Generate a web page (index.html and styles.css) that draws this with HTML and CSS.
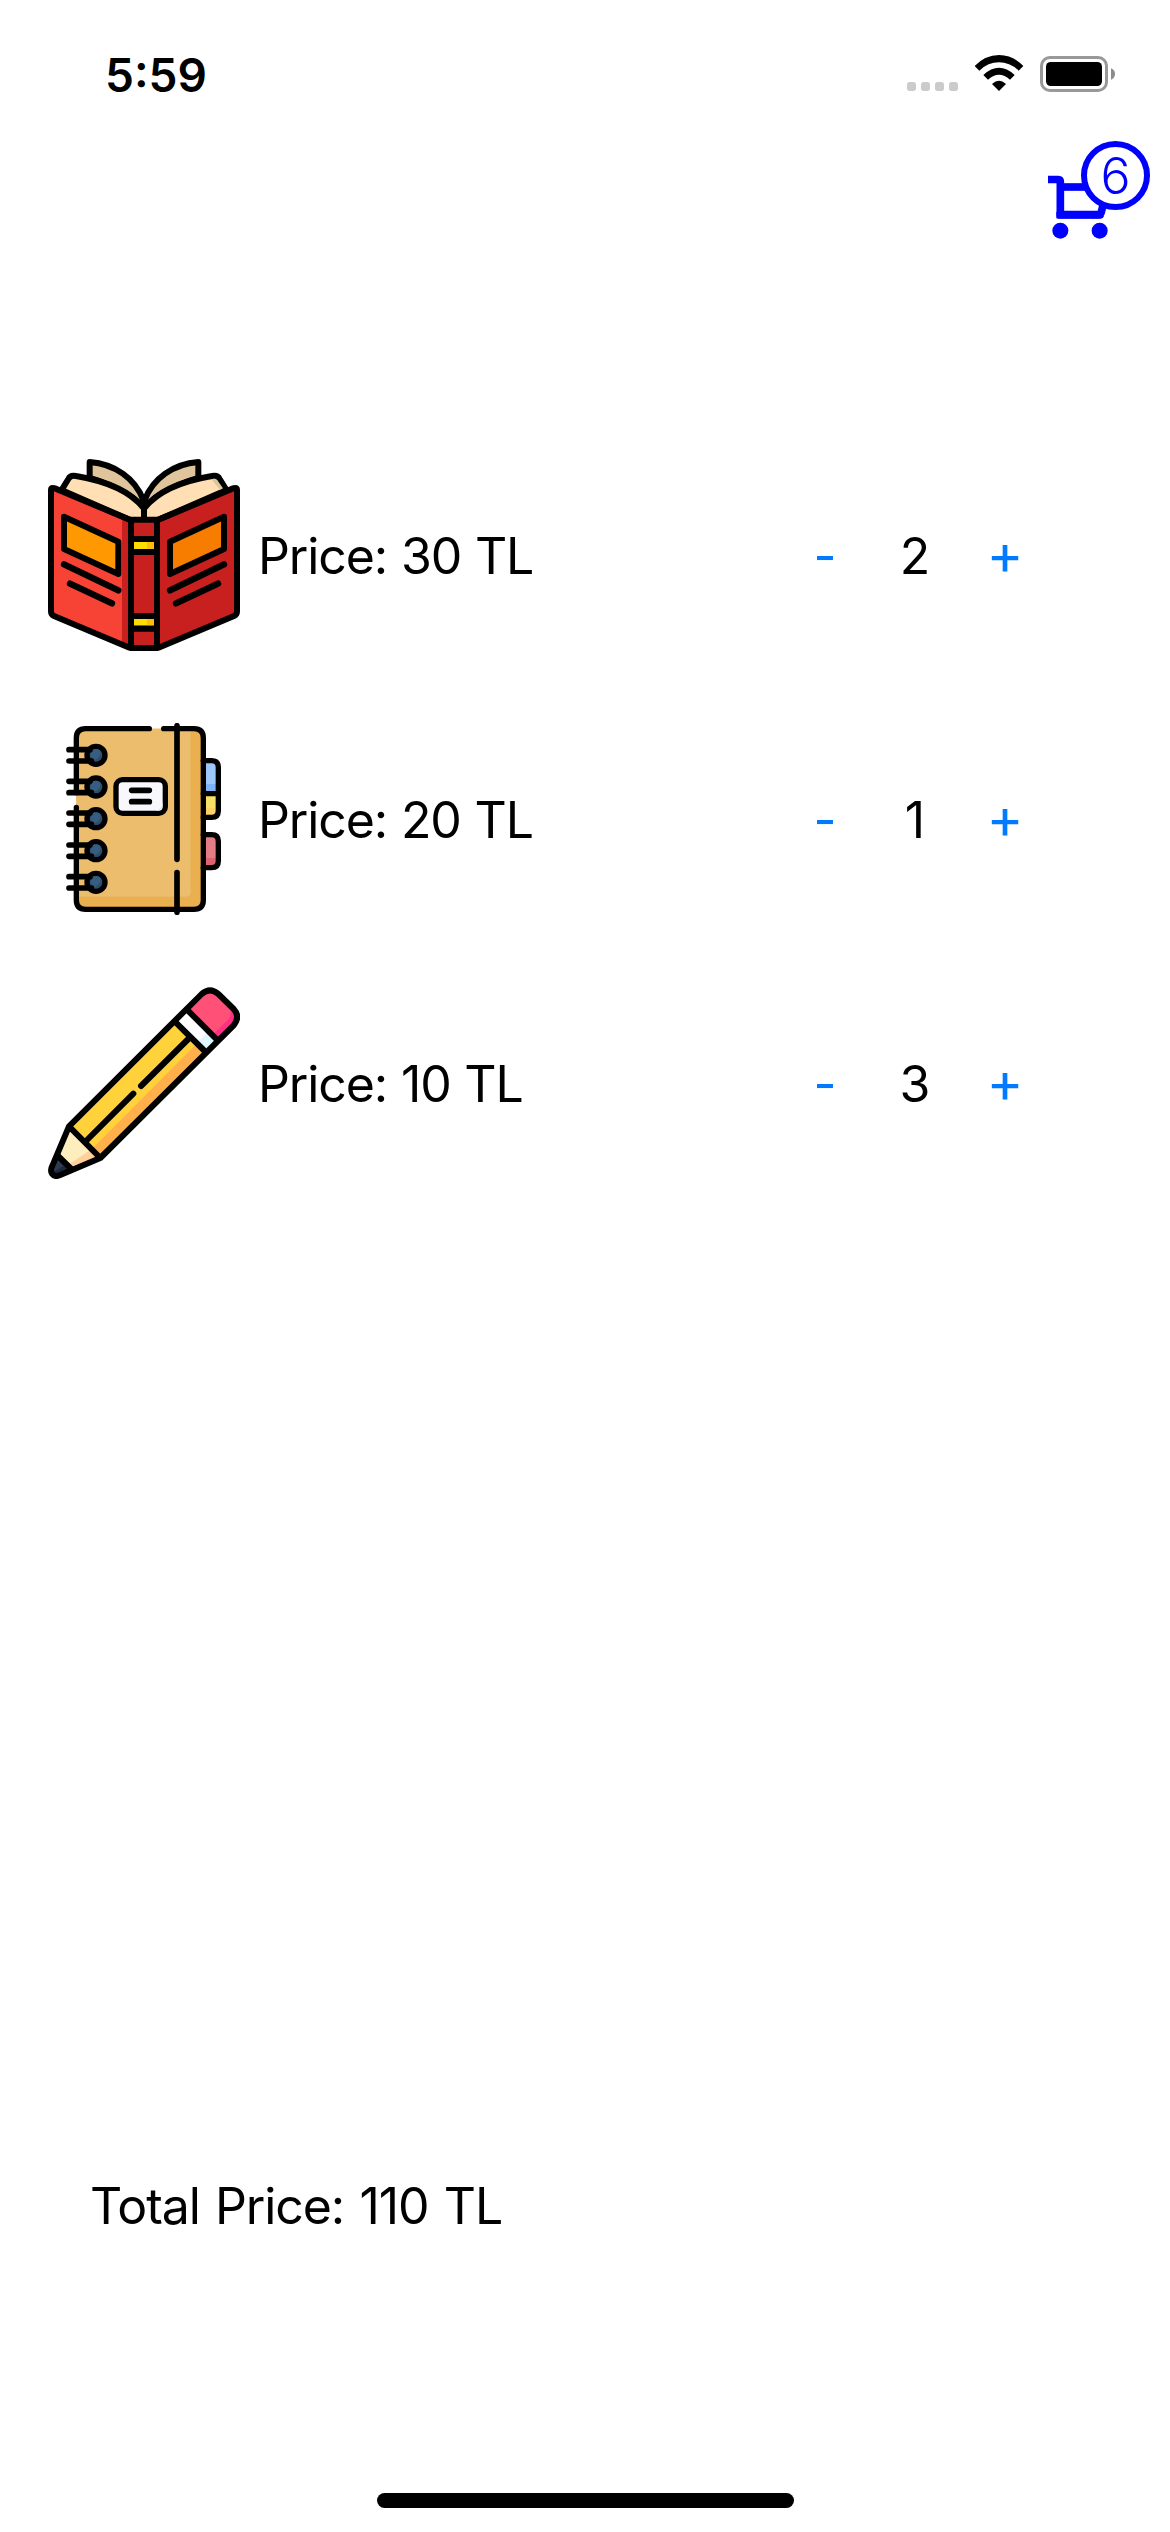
FILE: index.html
```html
<!DOCTYPE html>
<html lang="en">
<head>
<meta charset="utf-8">
<title>Cart</title>
<link rel="stylesheet" href="styles.css">
</head>
<body>
<div class="screen">
  <div class="status">
    <span class="time">5:59</span>
    <svg class="status-icons" width="250" height="70" viewBox="0 0 750 210">
      <g fill="#cbcbcb">
        <rect x="51" y="126" width="27" height="27" rx="8"/>
        <rect x="93" y="126" width="27" height="27" rx="8"/>
        <rect x="135" y="126" width="27" height="27" rx="8"/>
        <rect x="177" y="126" width="27" height="27" rx="8"/>
      </g>
      <path d="M327 153 L306 132 Q327 112 348 132 Z"/>
      <path d="M280 105 Q327 62 374 105 L360 119 Q327 89 294 119 Z"/>
      <path d="M254 78 Q286 45 327 45 Q368 45 400 78 L386 92 Q360 67 327 67 Q294 67 268 92 Z"/>
      <rect x="454.500" y="52.500" width="195" height="99" rx="25" fill="none" stroke="#999" stroke-width="9"/>
      <rect x="468" y="66" width="168" height="72" rx="14"/>
      <path d="M663 85 Q675 90 675 102 Q675 114 663 119 Z" fill="#8c8c8c"/>
    </svg>
  </div>

  <header class="header">
    <div class="cart">
      <svg class="cart-icon" width="60" height="65" viewBox="54 135 180 195" fill="none" stroke="#00f">
        <path d="M54 148.500H85Q91 148.500 91 155V254H204Q212 254 214 246L228 190" stroke-width="23"/>
        <path d="M91 171H180" stroke-width="23"/>
        <path d="M79 245V258Q79 266 88 266H212Q220 266 222 258" stroke="none" fill="#00f"/>
        <circle cx="91" cy="302" r="24" fill="#00f" stroke="none"/>
        <circle cx="209" cy="302" r="24" fill="#00f" stroke="none"/>
      </svg>
      <span class="badge">6</span>
    </div>
  </header>

  <main class="list">
    <div class="row">
      <svg class="picture" viewBox="24 27 576 576" stroke="#000" stroke-width="18" stroke-linejoin="round" stroke-linecap="round">
        <path d="M33 114L273 215V592L33 493Z" fill="#f74336" stroke="none"/>
        <path d="M246 200L273 212V592L246 582Z" fill="#c81f1f" stroke="none"/>
        <path d="M591 114L351 215V592L591 493Z" fill="#c81f1f" stroke="none"/>
        <path d="M149 100V36C225 42 285 85 310 150V172C270 130 220 105 149 84Z" fill="#dfc49c"/>
        <path d="M475 100V36C399 42 339 85 314 150V172C354 130 404 105 475 84Z" fill="#dfc49c"/>
        <path d="M66 118L85 87Q91 74 108 78C185 91 268 118 312 176V211H273L66 121Z" fill="#ffdfb3"/>
        <path d="M558 118L539 87Q533 74 516 78C439 91 356 118 312 176V211H351L558 121Z" fill="#ffdfb3"/>
        <path d="M514 88Q526 84 532 91L549 115L540 119Z" fill="#dfc49c" stroke="none"/>
        <path d="M273 211L56 120Q33 108 33 120V484Q33 494 42 498L265 592Q273 594 282 594H342Q351 594 359 592L582 498Q591 494 591 484V120Q591 108 568 120L351 211" fill="none"/>
        <rect x="273" y="209" width="78" height="385" fill="#c81f1f"/>
        <rect x="282" y="276" width="60" height="21" fill="#ffdc00" stroke="none"/>
        <rect x="321" y="276" width="21" height="21" fill="#fdbb0a" stroke="none"/>
        <rect x="282" y="507" width="60" height="19" fill="#ffdc00" stroke="none"/>
        <rect x="321" y="507" width="21" height="19" fill="#fdbb0a" stroke="none"/>
        <path d="M273 267H351M273 306H351M273 498H351M273 536H351" stroke-linecap="butt"/>
        <path d="M72 200L235 275V372L72 297Z" fill="#ff9801"/>
        <path d="M552 200L390 275V372L552 297Z" fill="#f77d00"/>
        <path d="M72 343L235 421M90 401L216 460M552 343L390 421M534 401L408 460" fill="none" stroke-width="19"/>
      </svg>
      <span class="price">Price: 30 TL</span>
      <div class="stepper"><span class="step">-</span><span class="count">2</span><span class="step plus">+</span></div>
    </div>

    <div class="row">
      <svg class="picture" viewBox="24 24 576 576" stroke="#000" stroke-width="16" stroke-linejoin="round" stroke-linecap="round" fill="none">
        <rect x="109" y="41" width="381" height="542" rx="28" fill="#eaaf4e" stroke="none"/>
        <path d="M109 545V69Q109 41 137 41H452V531Q452 545 438 545Z" fill="#ebbd6d" stroke="none"/>
        <path d="M490 137H519Q535 137 535 153V236H490Z" fill="#9dc6fb" stroke="none"/>
        <path d="M490 207H535V236H490Z" fill="#7eb3fa" stroke="none"/>
        <path d="M490 236H535V291Q535 307 519 307H490Z" fill="#f6e066" stroke="none"/>
        <path d="M490 279H535V291Q535 307 519 307H490Z" fill="#ffd064" stroke="none"/>
        <path d="M490 359H519Q535 359 535 375V442Q535 458 519 458H490Z" fill="#e37c84" stroke="none"/>
        <path d="M490 429H535V442Q535 458 519 458H490Z" fill="#dd636e" stroke="none"/>
        <path d="M490 137H515Q535 137 535 157V287Q535 307 515 307H490M490 236H535M490 359H515Q535 359 535 379V438Q535 458 515 458H490"/>
        <path d="M328 41H137Q109 41 109 69V233M109 277V555Q109 583 137 583H462Q490 583 490 555V69Q490 41 462 41H371"/>
        <path d="M411 32V433M411 473V592" stroke-width="17"/>
        <rect x="228" y="194" width="148" height="101" rx="20" fill="#f8f7fc"/>
        <path d="M236 287H348Q367 281 368 258V273Q366 287 355 287Z" fill="#e4ebf8" stroke="none"/>
        <path d="M275 226H328M275 260H328" stroke-width="17"/>
        <g id="ring">
          <circle cx="168" cy="121" r="27" fill="#2e4f6b"/>
          <path d="M154 105Q177 97 182 110Q184 125 164 135Q162 127 152 126Z" fill="#365e80" stroke="none"/>
          <path d="M87 104H150M87 138H154" stroke-width="17"/>
        </g>
        <use href="#ring" y="95"/>
        <use href="#ring" y="190"/>
        <use href="#ring" y="286"/>
        <use href="#ring" y="381"/>
      </svg>
      <span class="price">Price: 20 TL</span>
      <div class="stepper"><span class="step">-</span><span class="count">1</span><span class="step plus">+</span></div>
    </div>

    <div class="row">
      <svg class="picture" viewBox="24 21 576 576" stroke="#000" stroke-width="18" stroke-linejoin="round" stroke-linecap="round" fill="none">
        <path d="M87 439L404 124L497 216L181 534Z" fill="#ffd13b" stroke="none"/>
        <path d="M471 190L497 216L181 534L155 508Z" fill="#ffb04a" stroke="none"/>
        <path d="M404 124L440 88L533 181L497 216Z" fill="#fff" stroke="none"/>
        <path d="M504 154L533 181L497 216L471 190Z" fill="#dff5ff" stroke="none"/>
        <path d="M440 88L485 42Q510 20 535 42L581 87Q602 110 581 136L533 181Z" fill="#ff5078" stroke="none"/>
        <path d="M518 165L566 117Q575 106 571 84L581 87Q602 110 581 136L533 181Z" fill="#ff2f86" stroke="none"/>
        <path d="M87 439L181 534L96 569L54 528Z" fill="#ffeebd" stroke="none"/>
        <path d="M155 508L181 534L96 569L84 555Z" fill="#ffcf9c" stroke="none"/>
        <path d="M54 528L96 569L50 587Q30 585 34 570Z" fill="#2e3c51" stroke="none"/>
        <path d="M77 554L96 569L50 587Q42 585 40 576Z" fill="#1d293d" stroke="none"/>
        <path d="M87 439L485 42Q510 20 535 42L581 87Q602 110 581 136L181 534L59 586Q44 592 36 581Q31 573 35 562Z"/>
        <path d="M87 439L181 534M404 124L497 216M440 88L533 181M54 528L96 569" stroke-linecap="butt"/>
        <path d="M445 177L303 318M280 341L138 483"/>
      </svg>
      <span class="price">Price: 10 TL</span>
      <div class="stepper"><span class="step">-</span><span class="count">3</span><span class="step plus">+</span></div>
    </div>
  </main>

  <footer class="footer">
    <div class="total">Total Price: 110 TL</div>
    <div class="home-bar"></div>
  </footer>
</div>
</body>
</html>
```
FILE: styles.css
```css
* { box-sizing: border-box; }

body {
  margin: 0;
  background: #fff;
  color: #000;
  font-family: Inter, "Liberation Sans", sans-serif;
  font-size: 50px;
  line-height: 60px;
}

svg { display: block; }

.screen {
  width: 1170px;
  height: 2532px;
  display: flex;
  flex-direction: column;
}

.status {
  height: 132px;
  padding: 40px 30px 0 105px;
  display: flex;
  justify-content: space-between;
  align-items: flex-start;
}

.time {
  font-size: 46px;
  font-weight: 600;
  line-height: 70px;
}

.header {
  height: 291px;
  padding: 9px 20px 0;
  display: flex;
  justify-content: flex-end;
  align-items: flex-start;
}

.cart {
  position: relative;
  width: 102px;
  height: 99px;
  padding-top: 34px;
}

.badge {
  position: absolute;
  top: 0;
  right: 0;
  width: 69px;
  height: 69px;
  border: 6px solid #00f;
  border-radius: 50%;
  background: #fff;
  color: #00f;
  font-weight: 350;
  line-height: 58px;
  text-align: center;
}

.row {
  height: 264px;
  padding: 0 120px 0 48px;
  display: flex;
  align-items: center;
}

.picture {
  width: 192px;
  height: 192px;
  margin-right: 18px;
}

.price {
  padding-top: 1px;
  letter-spacing: -1.1px;
  word-spacing: 0.8px;
}

.stepper {
  margin-left: auto;
  padding-top: 1px;
  display: grid;
  grid-template-columns: repeat(3, 90px);
  text-align: center;
}

.step { color: #007aff; }

.plus {
  font-size: 56px;
  line-height: 56px;
}

.footer {
  flex: 1;
  padding: 961px 0 24px;
  display: flex;
  flex-direction: column;
  justify-content: space-between;
}

.total {
  padding-left: 90px;
  letter-spacing: -1.1px;
  word-spacing: 2.4px;
}

.home-bar {
  width: 417px;
  height: 15px;
  margin: 0 auto;
  border-radius: 8px;
  background: #000;
}
```
